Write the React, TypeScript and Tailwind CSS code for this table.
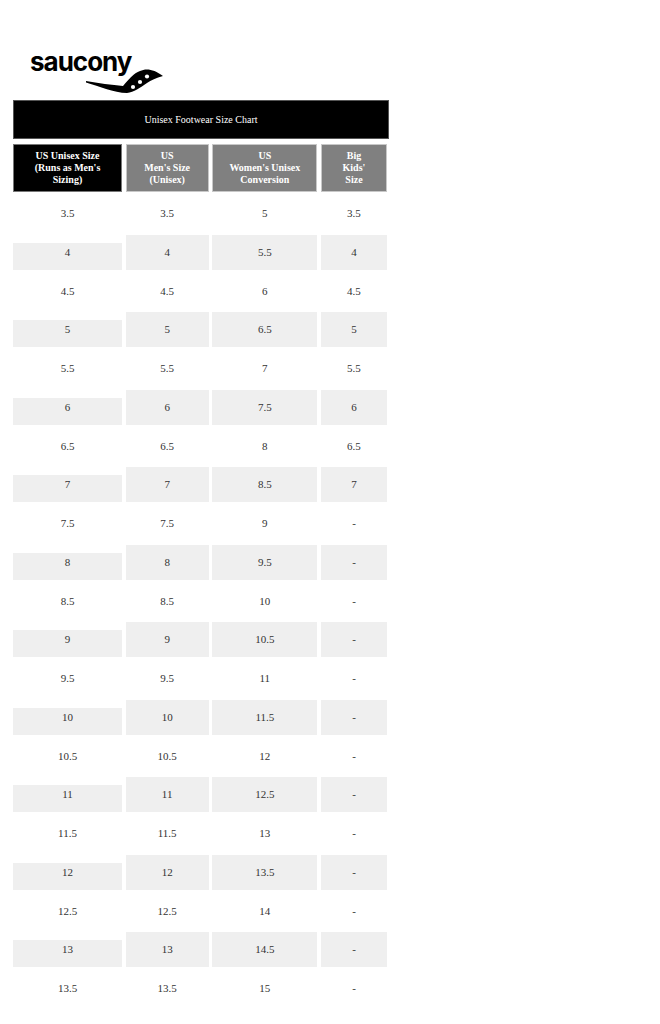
const rows: string[][] = [
  ['3.5', '3.5', '5', '3.5'],
  ['4', '4', '5.5', '4'],
  ['4.5', '4.5', '6', '4.5'],
  ['5', '5', '6.5', '5'],
  ['5.5', '5.5', '7', '5.5'],
  ['6', '6', '7.5', '6'],
  ['6.5', '6.5', '8', '6.5'],
  ['7', '7', '8.5', '7'],
  ['7.5', '7.5', '9', '-'],
  ['8', '8', '9.5', '-'],
  ['8.5', '8.5', '10', '-'],
  ['9', '9', '10.5', '-'],
  ['9.5', '9.5', '11', '-'],
  ['10', '10', '11.5', '-'],
  ['10.5', '10.5', '12', '-'],
  ['11', '11', '12.5', '-'],
  ['11.5', '11.5', '13', '-'],
  ['12', '12', '13.5', '-'],
  ['12.5', '12.5', '14', '-'],
  ['13', '13', '14.5', '-'],
  ['13.5', '13.5', '15', '-'],
];

const headers = [
  ['US Unisex Size', '(Runs as Men\'s', 'Sizing)'],
  ['US', 'Men\'s Size', '(Unisex)'],
  ['US', 'Women\'s Unisex', 'Conversion'],
  ['Big', 'Kids\'', 'Size'],
];

const Logo = () => (
  <div className="relative h-[42px] w-[150px]">
    <span className="absolute left-[17px] top-[-5px] font-['Inter',sans-serif] text-[26px] font-bold leading-[30px] tracking-[-1px] text-black">
      saucony
    </span>
    <svg className="absolute left-[71px] top-[13px]" width="82" height="30" viewBox="0 0 82 30">
      <path
        d="M2,16 C14,18 28,20 39,21 C44,15 50,8 56,6 C62,3 70,4 79,11 C72,13 67,15 63,18 C56,23 50,27 43,28 C30,28 14,21 2,17.5 Z"
        fill="#000"
      />
      <circle cx="49" cy="22" r="2.1" fill="#fff" />
      <circle cx="56" cy="17" r="2.1" fill="#fff" />
      <circle cx="63" cy="11.5" r="2.1" fill="#fff" />
    </svg>
  </div>
);

export default function App() {
  return (
    <div className="min-h-screen bg-white font-['Liberation_Serif',serif]">
      <div className="pl-[13px] pt-[52px]">
        <Logo />
        <div className="mt-[6px] w-[376px]">
          <div className="flex h-[39px] items-center justify-center border border-[#555] bg-black text-[10px] text-white">
            Unisex Footwear Size Chart
          </div>
          <div className="mt-[5px] grid w-[374px] grid-cols-[109px_83px_105px_66px] gap-x-[3.67px] gap-y-[3.75px]">
            {headers.map((lines, i) => (
              <div
                key={i}
                className={
                  i === 0
                    ? 'flex h-[48px] flex-col items-center justify-center border border-[#777] bg-black text-[10px] font-bold leading-[12px] text-white'
                    : 'flex h-[48px] flex-col items-center justify-center border border-[#c8c8c8] bg-[#808080] text-[10px] font-bold leading-[12px] text-white'
                }
              >
                {lines.map((l) => (
                  <span key={l}>{l}</span>
                ))}
              </div>
            ))}
            {rows.map((r, ri) =>
              r.map((v, ci) => {
                const shaded = ri % 2 === 1;
                let bg = '';
                if (shaded) bg = ci === 0 ? 'bg-[linear-gradient(to_bottom,#fff_8px,#efefef_8px)]' : 'bg-[#efefef]';
                return (
                  <div
                    key={`${ri}-${ci}`}
                    className={`flex h-[35px] items-center justify-center text-[11px] text-[#333] ${bg}`}
                  >
                    {v}
                  </div>
                );
              })
            )}
          </div>
        </div>
      </div>
    </div>
  );
}
